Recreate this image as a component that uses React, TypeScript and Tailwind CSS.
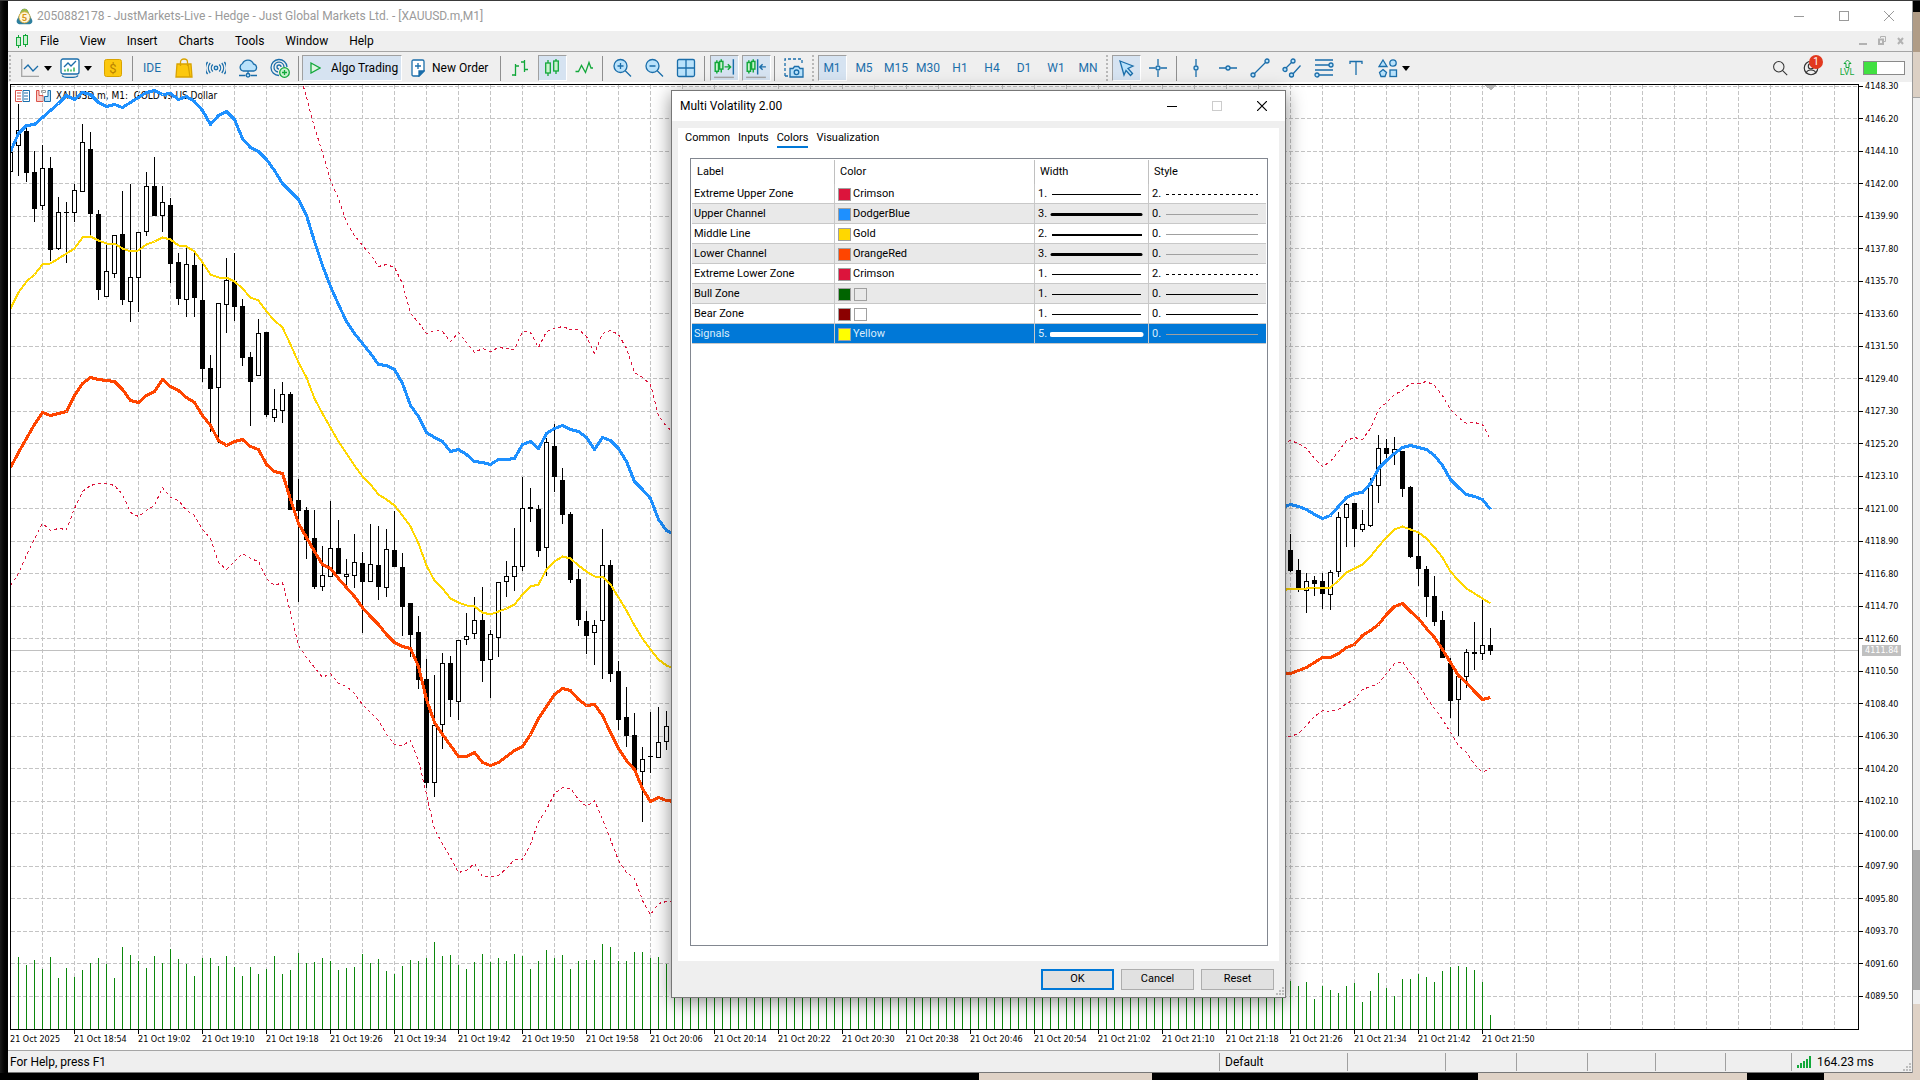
import type { ReactNode } from 'react';

// [x, high, top, bottom, low, type] where type is f = filled, h = hollow
type Candle = [number, number, number, number, number, 'f' | 'h'];

const candles: Candle[] = [
  [10, 150, 152, 172, 172, 'h'], [18, 104, 130, 146, 176, 'h'], [26, 127, 131, 173, 182, 'f'], [34, 151, 172, 209, 222, 'f'],
  [42, 145, 168, 206, 210, 'h'], [50, 157, 168, 250, 261, 'f'], [58, 197, 212, 249, 250, 'h'], [66, 202, 212, 213, 263, 'f'],
  [74, 184, 190, 213, 222, 'h'], [82, 124, 142, 192, 192, 'h'], [90, 132, 149, 214, 235, 'f'], [98, 210, 214, 290, 300, 'f'],
  [106, 245, 271, 297, 297, 'h'], [114, 235, 235, 274, 278, 'h'], [122, 191, 234, 300, 305, 'f'], [130, 184, 277, 302, 322, 'h'],
  [138, 232, 232, 278, 312, 'h'], [146, 172, 186, 232, 236, 'h'], [154, 157, 186, 216, 216, 'f'], [162, 186, 202, 216, 232, 'h'],
  [170, 198, 205, 264, 283, 'f'], [178, 253, 262, 299, 305, 'f'], [186, 247, 264, 300, 317, 'h'], [194, 251, 265, 298, 317, 'f'],
  [202, 261, 300, 369, 382, 'f'], [210, 355, 368, 389, 432, 'f'], [218, 303, 303, 388, 443, 'h'], [226, 258, 280, 305, 333, 'h'],
  [234, 253, 281, 307, 321, 'f'], [242, 299, 306, 358, 366, 'f'], [250, 352, 357, 382, 426, 'f'], [258, 319, 333, 376, 376, 'h'],
  [266, 332, 332, 415, 417, 'f'], [274, 389, 409, 418, 422, 'h'], [282, 382, 394, 411, 423, 'h'], [290, 392, 394, 510, 510, 'f'],
  [298, 479, 500, 511, 602, 'f'], [306, 507, 510, 540, 559, 'f'], [314, 510, 538, 587, 589, 'f'], [322, 546, 575, 587, 591, 'h'],
  [330, 501, 548, 577, 577, 'h'], [338, 520, 548, 574, 574, 'f'], [346, 559, 574, 577, 585, 'h'], [354, 534, 562, 576, 588, 'h'],
  [362, 552, 563, 582, 633, 'f'], [370, 524, 564, 582, 582, 'h'], [378, 526, 565, 587, 600, 'f'], [386, 529, 549, 588, 597, 'h'],
  [394, 511, 550, 567, 567, 'f'], [402, 553, 567, 607, 636, 'f'], [410, 603, 603, 635, 657, 'f'], [418, 616, 632, 680, 689, 'f'],
  [426, 659, 679, 783, 788, 'f'], [434, 675, 725, 783, 797, 'h'], [442, 653, 663, 725, 749, 'h'], [450, 656, 663, 700, 717, 'f'],
  [458, 640, 640, 702, 720, 'h'], [466, 613, 636, 640, 645, 'h'], [474, 597, 620, 634, 639, 'h'], [482, 587, 620, 661, 682, 'f'],
  [490, 630, 634, 660, 698, 'h'], [498, 582, 582, 638, 657, 'h'], [506, 561, 576, 582, 597, 'h'], [514, 528, 566, 577, 591, 'h'],
  [522, 477, 508, 567, 571, 'h'], [530, 488, 507, 509, 522, 'f'], [538, 505, 509, 551, 557, 'f'], [546, 438, 442, 548, 576, 'h'],
  [554, 424, 446, 477, 492, 'f'], [562, 468, 480, 515, 524, 'f'], [570, 512, 514, 580, 583, 'f'], [578, 569, 579, 620, 626, 'f'],
  [586, 611, 621, 636, 654, 'f'], [594, 620, 625, 633, 665, 'h'], [602, 529, 565, 621, 679, 'h'], [610, 560, 565, 674, 682, 'f'],
  [618, 661, 671, 720, 730, 'f'], [626, 687, 717, 736, 747, 'f'], [634, 713, 735, 770, 770, 'f'], [642, 747, 759, 772, 822, 'h'],
  [650, 712, 756, 757, 773, 'f'], [658, 707, 742, 758, 758, 'h'], [666, 711, 726, 742, 750, 'h'],
  [1290, 534, 550, 571, 572, 'f'], [1298, 559, 570, 590, 592, 'f'], [1306, 573, 581, 591, 613, 'h'], [1314, 576, 580, 584, 596, 'f'],
  [1322, 573, 581, 594, 609, 'f'], [1330, 570, 572, 595, 610, 'h'], [1338, 512, 517, 572, 577, 'h'], [1346, 503, 504, 518, 547, 'h'],
  [1354, 503, 503, 529, 547, 'f'], [1362, 510, 524, 530, 532, 'h'], [1370, 478, 485, 526, 527, 'h'], [1378, 435, 448, 486, 503, 'h'],
  [1386, 439, 448, 454, 460, 'f'], [1394, 437, 449, 454, 465, 'h'], [1402, 451, 451, 489, 497, 'f'], [1410, 486, 487, 557, 558, 'f'],
  [1418, 533, 556, 569, 586, 'f'], [1426, 566, 569, 597, 617, 'f'], [1434, 576, 596, 622, 626, 'f'], [1442, 611, 620, 658, 658, 'f'],
  [1450, 658, 663, 701, 718, 'f'], [1458, 676, 676, 700, 736, 'h'], [1466, 649, 652, 677, 688, 'h'], [1474, 622, 652, 654, 670, 'f'],
  [1482, 600, 645, 654, 660, 'h'], [1490, 628, 645, 651, 655, 'f'],
];

const upper = [
  151, 133, 125, 124, 117, 110, 103, 95, 99, 92, 94, 102, 106, 104, 107, 102, 97, 92, 90, 94, 93, 99, 96, 101, 110, 124, 115, 111, 119, 138,
  147, 151, 159, 170, 183, 191, 199, 215, 241, 265, 286, 304, 321, 333, 343, 353, 364, 365, 369, 383, 405, 416, 432, 437, 441, 451, 449, 454,
  461, 462, 464, 459, 459, 458, 444, 441, 448, 433, 428, 425, 429, 431, 437, 449, 437, 440, 448, 461, 481, 489, 498, 519, 530, 534,
];
const upperRight = [507, 504, 506, 509, 514, 518, 515, 506, 497, 493, 492, 483, 468, 460, 453, 447, 445, 447, 449, 455, 465, 479, 487, 494, 496, 499, 509];

const middle = [
  308, 292, 281, 274, 264, 263, 258, 253, 248, 237, 236, 240, 243, 243, 248, 251, 250, 244, 241, 237, 239, 245, 246, 251, 262, 274, 277, 277,
  281, 288, 297, 300, 311, 320, 327, 344, 362, 377, 398, 413, 427, 441, 453, 465, 476, 484, 494, 499, 505, 515, 526, 543, 565, 580, 588, 598,
  602, 605, 606, 612, 614, 611, 608, 604, 594, 586, 584, 569, 561, 556, 558, 565, 571, 576, 576, 584, 597, 610, 625, 638, 649, 659, 665, 668,
];
const middleRight = [590, 588, 588, 588, 587, 587, 587, 580, 572, 568, 564, 556, 546, 537, 529, 526, 529, 532, 538, 547, 557, 571, 580, 588, 593, 598, 603];

const lower = [
  467, 452, 438, 424, 412, 415, 413, 411, 395, 383, 377, 379, 380, 381, 389, 400, 402, 395, 391, 379, 386, 390, 397, 402, 415, 425, 440, 445,
  441, 439, 446, 449, 464, 471, 473, 499, 523, 537, 551, 564, 568, 578, 587, 596, 607, 616, 624, 634, 642, 646, 648, 666, 699, 722, 734, 745,
  756, 756, 752, 762, 765, 762, 756, 750, 746, 734, 718, 706, 694, 688, 690, 699, 705, 704, 715, 732, 748, 760, 769, 788, 801, 797, 800, 801,
];
const lowerRight = [673, 673, 670, 667, 662, 657, 657, 653, 647, 644, 635, 630, 624, 614, 606, 603, 611, 618, 628, 637, 649, 662, 675, 682, 691, 699, 697];

// starts at x = 298, above the visible range before that
const extremeUpper = [
  68, 97, 127, 152, 180, 198, 222, 235, 245, 254, 266, 264, 267, 283, 313, 322, 333, 330, 331, 341, 332, 342, 352, 348, 351, 347, 348, 349,
  331, 332, 347, 331, 328, 326, 329, 329, 336, 353, 333, 330, 334, 348, 372, 377, 384, 415, 426, 433,
];
const extremeUpperRight = [443, 440, 443, 448, 458, 466, 461, 451, 440, 437, 439, 428, 409, 402, 394, 390, 383, 383, 381, 385, 395, 409, 417, 423, 422, 424, 439];

const extremeLower = [
  585, 573, 555, 538, 523, 530, 528, 529, 508, 491, 485, 483, 483, 485, 494, 512, 516, 510, 505, 487, 497, 500, 510, 515, 529, 538, 562, 569,
  561, 553, 558, 561, 578, 585, 582, 612, 645, 657, 667, 677, 673, 683, 686, 693, 704, 712, 720, 734, 744, 745, 740, 760, 794, 829, 843, 857,
  872, 870, 863, 876, 876, 875, 868, 859, 859, 844, 821, 809, 793, 787, 788, 799, 806, 800, 819, 839, 860, 872, 878, 900, 914, 903, 901, 901,
];
const extremeLowerRight = [735, 736, 733, 725, 716, 710, 711, 709, 703, 699, 689, 686, 683, 673, 663, 661, 673, 683, 697, 708, 719, 732, 745, 752, 764, 772, 767];

const volumes = [
  957, 965, 960, 969, 957, 978, 968, 977, 970, 963, 958, 964, 978, 947, 955, 961, 968, 956, 963, 949, 959, 964, 976, 958, 958, 966, 956, 967,
  976, 967, 974, 969, 956, 974, 970, 953, 963, 962, 958, 961, 970, 968, 967, 954, 963, 959, 971, 974, 966, 960, 961, 958, 942, 956, 955, 965,
  969, 962, 954, 962, 958, 961, 954, 956, 969, 961, 950, 958, 955, 969, 961, 960, 960, 944, 947, 961, 961, 952, 952, 958, 957, 964,
  ...Array(77).fill(966),
  981, 986, 982, 999, 986, 990, 993, 986, 983, 1002, 991, 973, 988, 996, 979, 979, 974, 977, 982, 971, 967, 966, 967, 970, 982, 1015,
];

const series = [
  { color: '#dc143c', width: 1, dash: '3 3', parts: [[298, extremeUpper], [1282, extremeUpperRight]] },
  { color: '#dc143c', width: 1, dash: '3 3', parts: [[10, extremeLower], [1282, extremeLowerRight]] },
  { color: '#1e90ff', width: 3, dash: undefined, parts: [[10, upper], [1282, upperRight]] },
  { color: '#ffd700', width: 2, dash: undefined, parts: [[10, middle], [1282, middleRight]] },
  { color: '#ff4500', width: 3, dash: undefined, parts: [[10, lower], [1282, lowerRight]] },
] as { color: string; width: number; dash?: string; parts: [number, number[]][] }[];

const prices = Array.from({ length: 29 }, (_, i) => (4148.3 - i * 2.1).toFixed(2));

const times = Array.from({ length: 24 }, (_, i) => {
  if (i === 0) return '21 Oct 2025';
  const m = 18 * 60 + 54 + (i - 1) * 8;
  return `21 Oct ${Math.floor(m / 60)}:${String(m % 60).padStart(2, '0')}`;
});

const rows = [
  { label: 'Extreme Upper Zone', color: 'Crimson', hex: '#dc143c', width: 1, style: 2 },
  { label: 'Upper Channel', color: 'DodgerBlue', hex: '#1e90ff', width: 3, style: 0 },
  { label: 'Middle Line', color: 'Gold', hex: '#ffd700', width: 2, style: 0 },
  { label: 'Lower Channel', color: 'OrangeRed', hex: '#ff4500', width: 3, style: 0 },
  { label: 'Extreme Lower Zone', color: 'Crimson', hex: '#dc143c', width: 1, style: 2 },
  { label: 'Bull Zone', color: '', hex: '#006400', width: 1, style: 0 },
  { label: 'Bear Zone', color: '', hex: '#8b0000', width: 1, style: 0 },
  { label: 'Signals', color: 'Yellow', hex: '#ffff00', width: 5, style: 0, selected: true },
];

const BLUE = '#1b6eaa';
const SKY = '#b9e2fb';
const GREEN = '#12a83a';

function Icon({ children, size = 20, stroke = BLUE }: { children: ReactNode; size?: number; stroke?: string }) {
  return (
    <svg width={size} height={size} viewBox="0 0 20 20" fill="none" stroke={stroke} strokeWidth="1.3" aria-hidden="true">
      {children}
    </svg>
  );
}

function Tool({ label, active, children }: { label: string; active?: boolean; children: ReactNode }) {
  return (
    <div className="flex w-8 shrink-0 justify-center">
      <button
        type="button"
        aria-label={label}
        className={
          active
            ? 'flex h-[26px] w-[29px] items-center justify-center border border-b-white border-l-[#a0a0a0] border-r-white border-t-[#a0a0a0] bg-[#d6e3f1] text-[#1b6eaa]'
            : 'flex h-[26px] w-[29px] items-center justify-center text-[#1b6eaa]'
        }
      >
        {children}
      </button>
    </div>
  );
}

const Sep = () => <div className="ml-[2px] mr-[3px] h-[25px] w-px shrink-0 bg-[#8f8f8f]" />;
const Grip = () => <div className="mx-[2px] h-[26px] shrink-0 border-l-2 border-dotted border-[#b8b8b8]" />;
const Caret = () => (
  <svg width="8" height="5" viewBox="0 0 8 5" aria-hidden="true">
    <path d="M0 0h8L4 5z" fill="#000" />
  </svg>
);

const CandlePair = () => (
  <g stroke={GREEN}>
    <path d="M6 2v3M6 15v3M14 1v2M14 13v3" />
    <rect x="3.7" y="5" width="4.6" height="10" fill="#c9f2cf" />
    <rect x="11.7" y="3" width="4.6" height="10" fill="#c9f2cf" />
  </g>
);

function TitleBar() {
  return (
    <header className="flex h-[30px] shrink-0 items-center bg-white pl-2 text-[#9a9a9a]">
      <svg width="17" height="17" viewBox="0 0 20 20" aria-hidden="true">
        <path d="M10 1c3 0 4 2 5 5l4 8c1 3-1 5-4 5H5c-3 0-5-2-4-5l4-8c1-3 2-5 5-5z" fill="#2e7f9e" />
        <path d="M10 1c3 0 4 2 5 5l2 4-7-1-7 1 2-4c1-3 2-5 5-5z" fill="#9bb84a" />
        <circle cx="10" cy="11" r="6.5" fill="#fff6dc" stroke="#e2ab32" strokeWidth="1" />
        <text x="10" y="15" textAnchor="middle" fontSize="11" fontWeight="bold" fill="#d99412">5</text>
      </svg>
      <h1 className="ml-1 flex-1 truncate">2050882178 - JustMarkets-Live - Hedge - Just Global Markets Ltd. - [XAUUSD.m,M1]</h1>
      <button type="button" aria-label="Minimize" className="flex h-full w-[45px] items-center justify-center">
        <svg width="10" height="10" stroke="currentColor"><path d="M0 5.5h10" /></svg>
      </button>
      <button type="button" aria-label="Maximize" className="flex h-full w-[45px] items-center justify-center">
        <svg width="10" height="10" stroke="currentColor" fill="none"><rect x=".5" y=".5" width="9" height="9" /></svg>
      </button>
      <button type="button" aria-label="Close" className="flex h-full w-[46px] items-center justify-center">
        <svg width="10" height="10" stroke="currentColor"><path d="M0 0l10 10M10 0L0 10" /></svg>
      </button>
    </header>
  );
}

function MenuBar() {
  return (
    <nav className="flex h-[21px] shrink-0 items-center border-b border-[#a5a5a5] bg-[#efefef] pl-2 text-black">
      <svg width="12" height="15" viewBox="0 0 12 15" fill="#c9f2cf" stroke={GREEN} aria-hidden="true">
        <path d="M2.5 1v3M2.5 11v3M9.5 0v2M9.5 10v3" />
        <rect x=".5" y="3.5" width="4" height="8" />
        <rect x="7.5" y="1.5" width="4" height="9" />
      </svg>
      <div className="ml-[2px] flex gap-px">
        {['File', 'View', 'Insert', 'Charts', 'Tools', 'Window', 'Help'].map((m) => (
          <button key={m} type="button" className="px-[10px]">{m}</button>
        ))}
      </div>
      <div className="ml-auto mr-[7px] flex gap-[11px] text-[#b2b2b2]">
        <button type="button" aria-label="Minimize chart">
          <svg width="8" height="10"><path d="M0 7h8v2H0z" fill="currentColor" /></svg>
        </button>
        <button type="button" aria-label="Restore chart">
          <svg width="8" height="10" fill="none" stroke="currentColor"><path d="M2.5 2V.5h5v5H6" /><rect x="1" y="3.5" width="4" height="4.5" strokeWidth="2" /></svg>
        </button>
        <button type="button" aria-label="Close chart">
          <svg width="8" height="10" stroke="currentColor" strokeWidth="2"><path d="M1 2l5 6M6 2L1 8" /></svg>
        </button>
      </div>
    </nav>
  );
}

function Toolbar() {
  return (
    <div className="flex h-[30px] shrink-0 items-center bg-[#efefef] pt-[2px]">
      <div className="ml-px mr-[5px] h-[26px] shrink-0 border-l-2 border-dotted border-[#b8b8b8]" />
      <button type="button" aria-label="Line chart type" className="flex w-10 shrink-0 items-center gap-[5px] pl-[5px]">
        <svg width="18" height="18" fill="none" strokeWidth="1.3" aria-hidden="true">
          <path d="M.7 0v17.3H18" stroke="#a5a5a5" />
          <path d="M3 10l4-4 5 6 5-5" stroke={BLUE} />
        </svg>
        <Caret />
      </button>
      <button type="button" aria-label="Templates" className="flex w-10 shrink-0 items-center gap-1 pl-1">
        <Icon>
          <rect x="1" y="1" width="18" height="15" rx="2" fill="#fff" />
          <path d="M2 17.5c1 1.5 3 1.8 5 1.8h6c2 0 4-.3 5-1.8" />
          <path d="M4 9l4-4 3 3 5-5" />
          <path d="M5 13.5v-2M8 13.5v-3M11 13.5v-2M14 13.5v-4" stroke={GREEN} />
        </Icon>
        <Caret />
      </button>
      <button type="button" aria-label="Market" className="flex w-[34px] shrink-0 justify-center">
        <svg width="18" height="18" viewBox="0 0 18 18" aria-hidden="true">
          <rect x=".5" y=".5" width="17" height="17" rx="2" fill="#fcc80e" stroke="#d9a300" />
          <text x="9" y="14" textAnchor="middle" fontSize="13" fill="#b98200">$</text>
        </svg>
      </button>
      <Sep />
      <Tool label="MetaEditor IDE">IDE</Tool>
      <Tool label="Shop">
        <Icon stroke="#d9a300">
          <path d="M3 6h14l1 13H2z" fill="#fcc80e" />
          <path d="M14 6l2 13" />
          <path d="M6.500 8V4c0-4 7-4 7 0v4" />
        </Icon>
      </Tool>
      <Tool label="Signals">
        <Icon>
          <circle cx="10" cy="10" r="1.8" fill={SKY} />
          <path d="M6.8 6.500a5 5 0 000 7M13.2 6.500a5 5 0 010 7M4.200 5a8 8 0 000 10M15.800 5a8 8 0 010 10M1.600 4a10 10 0 000 12M18.400 4a10 10 0 010 12" />
        </Icon>
      </Tool>
      <Tool label="VPS">
        <Icon>
          <path d="M5 13a4 4 0 01-.5-7.500A6 6 0 0115.500 6 3.600 3.600 0 0116 13z" fill={SKY} />
          <path d="M10 13v3M1 17.500h6.500M12.500 17.500H19" />
          <circle cx="10" cy="17.3" r="1.8" fill={SKY} />
        </Icon>
      </Tool>
      <Tool label="Copy trading">
        <Icon>
          <path d="M9 17.500A8 8 0 1117 9M8 14A5 5 0 1114 9M9 11a2 2 0 112-2" />
          <circle cx="14.5" cy="14.5" r="4.8" fill="#c9f2cf" stroke={GREEN} />
          <path d="M14.500 12v5M12 14.500h5" stroke={GREEN} />
        </Icon>
      </Tool>
      <Sep />
      <button type="button" className="flex h-[26px] w-[100px] shrink-0 items-center gap-[10px] border border-b-white border-l-[#a0a0a0] border-r-white border-t-[#a0a0a0] bg-[#d6e3f1] pl-[7px] text-black">
        <svg width="11" height="12" viewBox="0 0 11 12" fill="#dff5e2" stroke={GREEN} strokeWidth="1.3" aria-hidden="true"><path d="M1 1l9 5-9 5z" /></svg>
        Algo Trading
      </button>
      <button type="button" className="flex w-[96px] shrink-0 items-center gap-[7px] pl-[9px] text-black">
        <svg width="14" height="18" viewBox="0 0 14 18" fill="#fff" stroke={BLUE} strokeWidth="1.3" aria-hidden="true">
          <path d="M1 2.500Q1 1 2.500 1h9Q13 1 13 2.500V12l-5 5H2.500Q1 17 1 15.500z" />
          <path d="M8 17v-5h5z" fill={BLUE} />
          <path d="M7 4v6M4 7h6" />
        </svg>
        New Order
      </button>
      <Sep />
      <Tool label="Bar chart">
        <Icon stroke={GREEN}><path d="M5.500 6v12M2 17h3.500M5.500 8H9M14.500 2v12M11 4h3.500M14.500 11.500H18" /></Icon>
      </Tool>
      <Tool label="Candlesticks" active><Icon><CandlePair /></Icon></Tool>
      <Tool label="Line chart">
        <Icon stroke={GREEN}><path d="M1.500 13.500h3l3-6 4 7 3.500-10 2 5.500H19" /></Icon>
      </Tool>
      <Sep />
      <Tool label="Zoom in">
        <Icon><circle cx="8.5" cy="8" r="6.5" fill={SKY} /><path d="M13 12.500l6 6M5.500 8h6M8.500 5v6" /></Icon>
      </Tool>
      <Tool label="Zoom out">
        <Icon><circle cx="8.5" cy="8" r="6.5" fill={SKY} /><path d="M13 12.500l6 6M5.500 8h6" /></Icon>
      </Tool>
      <Tool label="Tile windows">
        <Icon><rect x="1.5" y="1.5" width="17" height="17" rx="1.5" fill={SKY} /><path d="M10 1.500v17M1.500 10h17" /></Icon>
      </Tool>
      <Sep />
      <Tool label="Auto scroll" active>
        <Icon size={22}>
          <path d="M3.500 3v12M7.500 2v12" stroke={GREEN} />
          <rect x="2" y="5" width="3" height="8" fill="#c9f2cf" stroke={GREEN} />
          <rect x="6" y="4" width="3" height="7" fill="#c9f2cf" stroke={GREEN} />
          <path d="M10.500 9h5.500M13.500 6.500L16 9l-2.500 2.500" stroke={GREEN} />
          <path d="M18.500 2v14" />
          <path d="M1 18.500h18" stroke="#a5a5a5" />
        </Icon>
      </Tool>
      <Tool label="Chart shift" active>
        <Icon size={22}>
          <path d="M3.500 3v12M7.500 2v12" stroke={GREEN} />
          <rect x="2" y="5" width="3" height="8" fill="#c9f2cf" stroke={GREEN} />
          <rect x="6" y="4" width="3" height="7" fill="#c9f2cf" stroke={GREEN} />
          <path d="M11.500 2v14M19 9h-5.500M16 6.500L13.500 9l2.500 2.500" />
          <path d="M1 18.500h18" stroke="#a5a5a5" />
        </Icon>
      </Tool>
      <Sep />
      <Tool label="Screenshot">
        <Icon>
          <path d="M1 18V1h17v6M1 18h4" strokeDasharray="3 2" />
          <path d="M6 10.500h3l1.500-2h4l1.500 2h3V19H6z" fill={SKY} />
          <circle cx="12.5" cy="14.3" r="2.3" />
        </Icon>
      </Tool>
      <Grip />
      {['M1', 'M5', 'M15', 'M30', 'H1', 'H4', 'D1', 'W1', 'MN'].map((t) => (
        <Tool key={t} label={t} active={t === 'M1'}>{t}</Tool>
      ))}
      <Grip />
      <Tool label="Cursor" active>
        <Icon><path d="M4 3l13 5-5 2.500 4.500 5-2 2L10 12.500 8 17z" fill={SKY} /></Icon>
      </Tool>
      <Tool label="Crosshair">
        <Icon><path d="M10 1v6M10 13v6M1 10h6.500M12.500 10H19" /><circle cx="10" cy="10" r="2" fill={SKY} /></Icon>
      </Tool>
      <Sep />
      <Tool label="Vertical line">
        <Icon><path d="M10 1v6.500M10 12.500V19" /><circle cx="10" cy="10" r="2" fill={SKY} /></Icon>
      </Tool>
      <Tool label="Horizontal line">
        <Icon><path d="M1 10h7M12 10h7" /><circle cx="10" cy="10" r="2" fill={SKY} /></Icon>
      </Tool>
      <Tool label="Trend line">
        <Icon><path d="M4 16L16.500 3.500" /><circle cx="3" cy="17" r="2" fill={SKY} /><circle cx="17" cy="3" r="2" fill={SKY} /></Icon>
      </Tool>
      <Tool label="Channel">
        <Icon><path d="M3.500 10.500L10 4M10 17l8.500-9.500" /><circle cx="3" cy="11.5" r="2" fill={SKY} /><circle cx="11" cy="3" r="2" fill={SKY} /><circle cx="9.5" cy="17" r="2" fill={SKY} /></Icon>
      </Tool>
      <Tool label="Fibonacci">
        <Icon><path d="M1 2h18M1 7h14M1 12h18M5 17h14" /><circle cx="17" cy="7" r="2" fill={SKY} /><circle cx="3" cy="17" r="2" fill={SKY} /></Icon>
      </Tool>
      <Tool label="Text">
        <Icon><path d="M4 6V3.500h12V6M10 3.500V17" /></Icon>
      </Tool>
      <button type="button" aria-label="Shapes" className="ml-[6px] flex shrink-0 items-center gap-1">
        <Icon>
          <path d="M5 2l4 6.500H1z" fill={SKY} />
          <circle cx="15" cy="5" r="3.2" fill={SKY} />
          <path d="M5 11.500l3.500 3-1.500 4H3l-1.500-4z" fill={SKY} />
          <rect x="12" y="12" width="6.5" height="6.5" fill={SKY} />
        </Icon>
        <Caret />
      </button>
      <div className="ml-auto mr-[7px] flex items-center gap-[14px]">
        <button type="button" aria-label="Search">
          <Icon size={16} stroke="#333"><circle cx="8.5" cy="8.5" r="6.5" /><path d="M13 13l6 6" /></Icon>
        </button>
        <button type="button" aria-label="Account" className="relative w-[23px]">
          <Icon size={18} stroke="#333"><circle cx="10" cy="10" r="7.5" /><circle cx="10" cy="8" r="3" /><path d="M4.500 16c1-5 10-5 11 0" /></Icon>
          <span className="absolute -top-1 left-[7px] h-[14px] w-[14px] rounded-full bg-[#e2391f] text-center text-[10px] leading-[14px] text-white">1</span>
        </button>
        <button type="button" aria-label="Level" className="flex w-4 flex-col items-center text-[9px] leading-[9px] text-[#12a83a]">
          <svg width="9" height="9" viewBox="0 0 9 9" fill="none" stroke={GREEN} aria-hidden="true"><path d="M3 8.500V4.500H1L4.500 1 8 4.500H6v4z" /></svg>
          LVL
        </button>
        <div className="-ml-[6px] h-[14px] w-[42px] border border-[#8a8a8a] bg-white">
          <div className="h-full w-[13px] bg-[#41e041]" />
        </div>
      </div>
    </div>
  );
}

function Plot() {
  return (
    <svg className="relative block h-full w-full" shapeRendering="crispEdges" role="img" aria-label="XAUUSD.m M1 candlestick chart">
      <g transform="translate(-11 -85)">
        <g stroke="#c4c4c4" strokeDasharray="4 2">
          {Array.from({ length: 57 }, (_, i) => (
            <line key={i} x1={42.5 + i * 32} x2={42.5 + i * 32} y1="85" y2="1029" />
          ))}
          {prices.map((p, i) => (
            <line key={p} x1="11" x2="102%" y1={Math.floor(86 + i * 32.5) + 0.5} y2={Math.floor(86 + i * 32.5) + 0.5} />
          ))}
        </g>
        {volumes.map((y, i) => (
          <rect key={i} x={18 + i * 8} y={y} width="1" height={1029 - y} fill="#0c870c" />
        ))}
        <rect x="11" y="650" width="100%" height="1" fill="#c0c0c0" />
        <path d="M1484 85h13l-6 5z" fill="#b4b4b4" />
        {candles.map(([x, high, top, bottom, low, type]) => (
          <g key={x}>
            <rect x={x} y={high} width="1" height={low - high} />
            {type === 'f' ? (
              <rect x={x - 2} y={top} width="5" height={bottom - top} />
            ) : (
              <rect x={x - 1.5} y={top + 0.5} width="4" height={bottom - top - 1} fill="#fff" stroke="#000" />
            )}
          </g>
        ))}
        {series.map((s, i) =>
          s.parts.map(([start, ys]) => (
            <polyline
              key={`${i}-${start}`}
              points={ys.map((y, n) => `${start + n * 8 + 0.5},${y + 0.5}`).join(' ')}
              fill="none"
              stroke={s.color}
              strokeWidth={s.width}
              strokeDasharray={s.dash}
              strokeLinejoin="round"
            />
          )),
        )}
      </g>
    </svg>
  );
}

function Chart() {
  return (
    <main className="flex min-h-0 flex-1 bg-white pl-[2px] font-['DejaVu_Sans_Condensed','DejaVu_Sans',sans-serif] text-[9px] text-black">
      <div className="flex min-w-0 flex-1 flex-col pt-[2px]">
        <div className="relative min-h-0 flex-1 border border-black">
          <div className="absolute left-1 top-[5px] flex items-center gap-[6px] text-[10px] leading-3">
            <svg width="15" height="12" viewBox="0 0 15 12" fill="#fff" aria-hidden="true">
              <path d="M7 .5H.5v11H7M2 3h4M2 6h4M2 9h4" stroke="#d9534a" />
              <path d="M8 .5h6.500v11H8zM9 3h4M9 6h4M9 9h4" stroke={BLUE} />
            </svg>
            <svg width="15" height="12" viewBox="0 0 15 12" aria-hidden="true">
              <path d="M.5.5H3v5h4v6H.5z" fill="#fbc9c4" stroke="#d9534a" />
              <path d="M12 .5h2.500v11H8.500v-5H12z" fill={SKY} stroke={BLUE} />
              <path d="M5.500 2.500v-2h4v2z" fill="#fff" stroke="#999" />
            </svg>
            <span className="-ml-px whitespace-pre">XAUUSD.m, M1:  GOLD vs US Dollar</span>
          </div>
          <Plot />
        </div>
        <ol className="flex h-5 shrink-0 overflow-hidden whitespace-nowrap leading-[11px]">
          {times.map((t, i) => (
            <li key={t} className="w-16 shrink-0">
              <div className={i === 0 ? 'h-1' : 'h-1 border-l border-black'} />
              {t}
            </li>
          ))}
        </ol>
      </div>
      <div className="relative w-[53px] shrink-0 pb-[50px]">
        <ol className="flex h-full flex-col justify-between leading-[8px]">
          {prices.map((p) => (
            <li key={p} className="flex items-center gap-[2px]">
              <span className="h-px w-1 bg-black" />
              {p}
            </li>
          ))}
        </ol>
        <div className="absolute left-[3px] top-[563px] w-[39px] bg-[#c0c0c0] pl-[3px] leading-[11px] text-white">4111.84</div>
      </div>
    </main>
  );
}

function StatusBar() {
  return (
    <footer className="flex h-[23px] shrink-0 items-center border-b border-t border-b-[#777] border-t-[#a5a5a5] bg-[#efefef] text-black">
      <span className="flex-1 pl-[2px]">For Help, press F1</span>
      <span className="h-[18px] w-[128px] border-l border-[#a0a0a0] pl-[5px] leading-[18px]">Default</span>
      <span className="h-[18px] w-[98px] border-l border-[#a0a0a0]" />
      <span className="h-[18px] w-[71px] border-l border-[#a0a0a0]" />
      <span className="h-[18px] w-[71px] border-l border-[#a0a0a0]" />
      <span className="h-[18px] w-[68px] border-l border-[#a0a0a0]" />
      <span className="h-[18px] w-[70px] border-l border-[#a0a0a0]" />
      <span className="h-[18px] w-[66px] border-l border-[#a0a0a0]" />
      <span className="flex h-[18px] w-[112px] items-center gap-[6px] border-l border-[#a0a0a0] pl-[5px]">
        <svg width="14" height="12" fill={GREEN} aria-hidden="true">
          <path d="M0 9h2v3H0zM3 7h2v5H3zM6 5h2v7H6zM9 3h2v9H9zM12 0h2v12h-2z" />
        </svg>
        164.23 ms
      </span>
      <Resize />
    </footer>
  );
}

const Resize = () => (
  <svg width="9" height="9" fill="#bdbdbd" className="self-end" aria-hidden="true">
    <path d="M6 0h2v2H6zM3 3h2v2H3zM6 3h2v2H6zM0 6h2v2H0zM3 6h2v2H3zM6 6h2v2H6z" />
  </svg>
);

function Dialog() {
  return (
    <section
      role="dialog"
      aria-label="Multi Volatility 2.00"
      className="absolute bottom-[82px] left-[671px] top-[90px] flex w-[615px] flex-col border border-[#777] bg-[#efefef] text-[11px] text-black shadow-[0_4px_18px_rgba(0,0,0,0.45)]"
    >
      <div className="flex h-[30px] shrink-0 items-center bg-white pl-2 text-xs">
        <h2 className="flex-1">Multi Volatility 2.00</h2>
        <button type="button" aria-label="Minimize" className="flex h-full w-[45px] items-center justify-center">
          <svg width="10" height="10" stroke="#000"><path d="M0 5.500h10" /></svg>
        </button>
        <button type="button" aria-label="Maximize" disabled className="flex h-full w-[45px] items-center justify-center">
          <svg width="10" height="10" stroke="#ccc" fill="none"><rect x=".5" y=".5" width="9" height="9" /></svg>
        </button>
        <button type="button" aria-label="Close" className="flex h-full w-[46px] items-center justify-center">
          <svg width="10" height="10" stroke="#000" strokeWidth="1.2"><path d="M0 0l10 10M10 0L0 10" /></svg>
        </button>
      </div>
      <div className="mx-[6px] mt-[7px] flex min-h-0 flex-1 flex-col bg-white pb-[15px] pl-3 pr-[11px]">
        <div role="tablist" className="-ml-[5px] flex h-5 gap-2">
          {['Common', 'Inputs', 'Colors', 'Visualization'].map((t) => (
            <button
              key={t}
              type="button"
              role="tab"
              aria-selected={t === 'Colors'}
              className={t === 'Colors' ? 'border-b-2 border-[#0078d7] pt-[2px]' : 'border-b-2 border-transparent pt-[2px]'}
            >
              {t}
            </button>
          ))}
        </div>
        <div className="mt-[10px] min-h-0 flex-1 border border-[#828790] p-px">
          <table className="w-full table-fixed border-separate border-spacing-0 text-left">
            <colgroup>
              <col className="w-[143px]" />
              <col className="w-[200px]" />
              <col className="w-[114px]" />
              <col />
            </colgroup>
            <thead>
              <tr className="h-6">
                <th className="border-r border-[#c0c0c0] p-0 pl-[5px] pt-px font-normal">Label</th>
                <th className="border-r border-[#c0c0c0] p-0 pl-[5px] pt-px font-normal">Color</th>
                <th className="border-r border-[#c0c0c0] p-0 pl-[5px] pt-px font-normal">Width</th>
                <th className="p-0 pl-[5px] pt-px font-normal">Style</th>
              </tr>
            </thead>
            <tbody>
              {rows.map((r) => (
                <tr key={r.label} className={r.selected ? 'h-5 bg-[#0078d7] text-[#d9ecfb]' : 'h-5 even:bg-[#e9e9e9]'}>
                  <td className="border-b border-r border-[#c8c8c8] p-0 pl-[2px] pt-[2px]">{r.label}</td>
                  <td className="border-b border-r border-[#c8c8c8] p-0 pl-[3px] pt-px">
                    <div className="flex items-center gap-[2px]">
                      <span className="h-[13px] w-[13px] border border-[#a0a0a0]" style={{ backgroundColor: r.hex }} />
                      {r.color || <span className="ml-px h-[13px] w-[13px] border border-[#a0a0a0]" />}
                    </div>
                  </td>
                  <td className="border-b border-r border-[#c8c8c8] p-0 pl-[3px] pt-px">
                    <div className="flex items-center gap-[2px]">
                      <span className="w-[10px]">{r.width}.</span>
                      <svg width="95" height="9" stroke={r.selected ? '#fff' : '#000'} strokeWidth={r.width} strokeLinecap={r.width > 2 ? 'round' : 'butt'} aria-hidden="true">
                        <path d={r.width % 2 ? 'M2 4.500h89' : 'M2 5h90'} />
                      </svg>
                    </div>
                  </td>
                  <td className="border-b border-[#c8c8c8] p-0 pl-[3px] pt-px">
                    <div className="flex items-center gap-1">
                      <span className="w-[10px]">{r.style}.</span>
                      <svg width="93" height="9" stroke={r.width > 1 ? '#a0a0a0' : '#000'} strokeDasharray={r.style === 2 ? '3 3' : undefined} aria-hidden="true">
                        <path d="M0 4.500h92" />
                      </svg>
                    </div>
                  </td>
                </tr>
              ))}
            </tbody>
          </table>
        </div>
      </div>
      <div className="relative flex h-9 shrink-0 items-center justify-end gap-[7px] pr-[11px]">
        <button type="button" className="h-[21px] w-[73px] border-2 border-[#0078d7] bg-[#e1e1e1]">OK</button>
        <button type="button" className="h-[21px] w-[73px] border border-[#adadad] bg-[#e1e1e1]">Cancel</button>
        <button type="button" className="h-[21px] w-[73px] border border-[#adadad] bg-[#e1e1e1]">Reset</button>
        <span className="absolute bottom-px right-0"><Resize /></span>
      </div>
    </section>
  );
}

export default function App() {
  return (
    <div className="relative flex h-screen flex-col overflow-hidden bg-black font-['Roboto','Liberation_Sans',sans-serif] text-xs">
      <div className="h-px shrink-0 bg-[#3a3a3a]" />
      <div className="flex min-h-0 flex-1">
        <div className="w-2 shrink-0 bg-gradient-to-r from-[#1a1a1a] to-black" />
        <div className="flex min-w-0 flex-1 flex-col">
          <TitleBar />
          <MenuBar />
          <Toolbar />
          <Chart />
          <StatusBar />
        </div>
        <div className="flex w-2 shrink-0 flex-col border-l border-[#999] bg-[#efefef]">
          <div className="h-[11px] shrink-0 bg-black" />
          <div className="h-10 shrink-0 bg-[#b09c86]" />
          <div className="h-[46px] shrink-0 border-b border-[#a5a5a5] bg-[#dcd0c4]" />
          <div className="flex-1" />
          <div className="h-[140px] shrink-0 bg-[#a9a9a9]" />
          <div className="h-[14px] shrink-0" />
          <div className="h-[69px] shrink-0 bg-[#dfd2c6]" />
        </div>
      </div>
      <div className="flex h-[7px] shrink-0">
        <div className="w-[51%]" />
        <div className="w-[9%] bg-[#dfd2c6]" />
        <div className="w-[17%]" />
        <div className="w-[14%] bg-[#dfd2c6]" />
        <div className="w-[4%]" />
        <div className="flex-1 bg-[#dfd2c6]" />
      </div>
      <Dialog />
    </div>
  );
}
